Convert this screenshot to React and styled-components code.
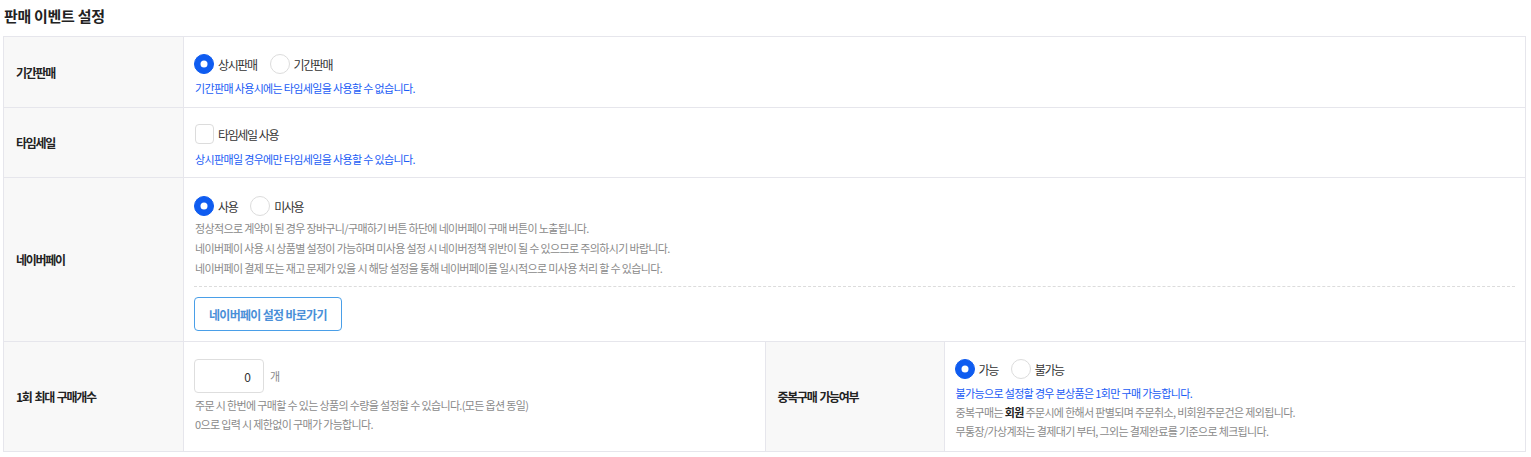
import React from "react";
import styled, { createGlobalStyle } from "styled-components";

const Global = createGlobalStyle`
  html, body { margin: 0; padding: 0; background: #fff; }
  body { font-family: "Noto Sans CJK KR", "Noto Sans", sans-serif; color: #222; }
  * { box-sizing: border-box; }
`;

const Page = styled.div`
  padding: 6px 5px 6px 3px;
`;

const Title = styled.h2`
  margin: 0 0 10px 1px;
  font-size: 15px;
  line-height: 20px;
  font-weight: 700;
  letter-spacing: -0.3px;
  color: #222;
`;

const Table = styled.div`
  display: grid;
  grid-template-columns: 180px 1fr 180px 1fr;
  border: 1px solid #e6e6ec;
  border-bottom: none;
`;

const Label = styled.div`
  display: flex;
  align-items: center;
  padding: 0 0 0 12px;
  background: #f8f8f8;
  border-right: 1px solid #e6e6ec;
  border-bottom: 1px solid #e6e6ec;
  font-size: 12px;
  font-weight: 700;
  letter-spacing: -1.3px;
  word-spacing: 1.5px;
  color: #222;
  ${(p) => p.$leftBorder && "border-left: 1px solid #e6e6ec;"}
`;

const Cell = styled.div`
  grid-column: span ${(p) => p.$span || 1};
  padding: ${(p) => p.$pad || "17px 10px 10px"};
  border-bottom: 1px solid #e6e6ec;
  display: flex;
  flex-direction: column;
  min-width: 0;
`;

const RadioGroup = styled.div`
  display: flex;
  align-items: center;
  height: 20px;
`;

const Option = styled.label`
  display: flex;
  align-items: center;
  margin-right: 13px;
  font-size: 12px;
  letter-spacing: -1.4px;
  word-spacing: 1px;
  color: #333;
  cursor: pointer;
`;

const RadioDot = styled.span`
  width: 20px;
  height: 20px;
  border-radius: 50%;
  margin-right: 4px;
  flex: none;
  position: relative;
  background: ${(p) => (p.$on ? "#0f5cf0" : "#fff")};
  border: 1px solid ${(p) => (p.$on ? "#0f5cf0" : "#dcdcdc")};
  &::after {
    content: "";
    display: ${(p) => (p.$on ? "block" : "none")};
    position: absolute;
    width: 7px;
    height: 7px;
    border-radius: 50%;
    background: #fff;
    left: 50%;
    top: 50%;
    transform: translate(-50%, -50%);
  }
`;

const CheckBox = styled.span`
  width: 19px;
  height: 20px;
  border-radius: 4px;
  border: 1px solid #dcdcdc;
  background: #fff;
  margin: 0 4px 0 1px;
  flex: none;
`;

const Help = styled.p`
  margin: ${(p) => p.$mt || "6px"} 0 0 1px;
  font-size: 11px;
  line-height: ${(p) => p.$lh || "16px"};
  letter-spacing: -0.65px;
  color: ${(p) => (p.$blue ? "#1a5cf5" : "#8a8a8a")};
  white-space: nowrap;
  b { color: #222; font-weight: 700; }
`;

const Lines = styled.div`
  margin-top: ${(p) => p.$mt || "2px"};
  display: flex;
  flex-direction: column;
`;

const Dashed = styled.hr`
  margin: 8px 0 0;
  border: none;
  border-top: 1px dashed #dcdcdc;
  height: 0;
`;

const LinkButton = styled.button`
  align-self: flex-start;
  margin: 10px 0 0 0;
  height: 34px;
  padding: 0 14px;
  border: 1px solid #4a9fe8;
  border-radius: 4px;
  background: #fff;
  color: #4a8fd8;
  font-family: inherit;
  font-size: 12px;
  font-weight: 700;
  letter-spacing: -0.7px;
  cursor: pointer;
`;

const QtyRow = styled.div`
  display: flex;
  align-items: center;
`;

const QtyInput = styled.input`
  width: 70px;
  height: 34px;
  border: 1px solid #dedede;
  border-radius: 4px;
  padding: 0 12px;
  text-align: right;
  font-family: inherit;
  font-size: 12px;
  color: #333;
  outline: none;
`;

const Unit = styled.span`
  margin-left: 6px;
  font-size: 11px;
  color: #888;
`;

function Radio({ on, children }) {
  return (
    <Option>
      <RadioDot $on={on} />
      {children}
    </Option>
  );
}

export default function App() {
  return (
    <>
      <Global />
      <Page>
        <Title>판매 이벤트 설정</Title>
        <Table>
          <Label>기간판매</Label>
          <Cell $span={3} $pad="17px 10px 11px">
            <RadioGroup>
              <Radio on>상시판매</Radio>
              <Radio>기간판매</Radio>
            </RadioGroup>
            <Help $blue>기간판매 사용시에는 타임세일을 사용할 수 없습니다.</Help>
          </Cell>

          <Label>타임세일</Label>
          <Cell $span={3} $pad="16px 10px 10px">
            <RadioGroup>
              <Option>
                <CheckBox />
                타임세일 사용
              </Option>
            </RadioGroup>
            <Help $blue $mt="7px">상시판매일 경우에만 타임세일을 사용할 수 있습니다.</Help>
          </Cell>

          <Label>네이버페이</Label>
          <Cell $span={3} $pad="18px 10px 10px">
            <RadioGroup>
              <Radio on>사용</Radio>
              <Radio>미사용</Radio>
            </RadioGroup>
            <Lines>
              <Help $mt="0" $lh="20px">정상적으로 계약이 된 경우 장바구니/구매하기 버튼 하단에 네이버페이 구매 버튼이 노출됩니다.</Help>
              <Help $mt="0" $lh="20px">네이버페이 사용 시 상품별 설정이 가능하며 미사용 설정 시 네이버정책 위반이 될 수 있으므로 주의하시기 바랍니다.</Help>
              <Help $mt="0" $lh="20px">네이버페이 결제 또는 재고 문제가 있을 시 해당 설정을 통해 네이버페이를 일시적으로 미사용 처리 할 수 있습니다.</Help>
            </Lines>
            <Dashed />
            <LinkButton>네이버페이 설정 바로가기</LinkButton>
          </Cell>

          <Label>1회 최대 구매개수</Label>
          <Cell $pad="17px 10px 15px">
            <QtyRow>
              <QtyInput defaultValue="0" />
              <Unit>개</Unit>
            </QtyRow>
            <Lines $mt="3px">
              <Help $mt="0" $lh="19px">주문 시 한번에 구매할 수 있는 상품의 수량을 설정할 수 있습니다.(모든 옵션 동일)</Help>
              <Help $mt="0" $lh="19px">0으로 입력 시 제한없이 구매가 가능합니다.</Help>
            </Lines>
          </Cell>
          <Label $leftBorder>중복구매 가능여부</Label>
          <Cell $pad="17px 10px 10px">
            <RadioGroup>
              <Radio on>가능</Radio>
              <Radio>불가능</Radio>
            </RadioGroup>
            <Lines $mt="5px">
              <Help $blue $mt="0" $lh="19px">불가능으로 설정할 경우 본상품은 1회만 구매 가능합니다.</Help>
              <Help $mt="0" $lh="19px">중복구매는 <b>회원</b> 주문시에 한해서 판별되며 주문취소, 비회원주문건은 제외됩니다.</Help>
              <Help $mt="0" $lh="19px">무통장/가상계좌는 결제대기 부터, 그외는 결제완료를 기준으로 체크됩니다.</Help>
            </Lines>
          </Cell>
        </Table>
      </Page>
    </>
  );
}
